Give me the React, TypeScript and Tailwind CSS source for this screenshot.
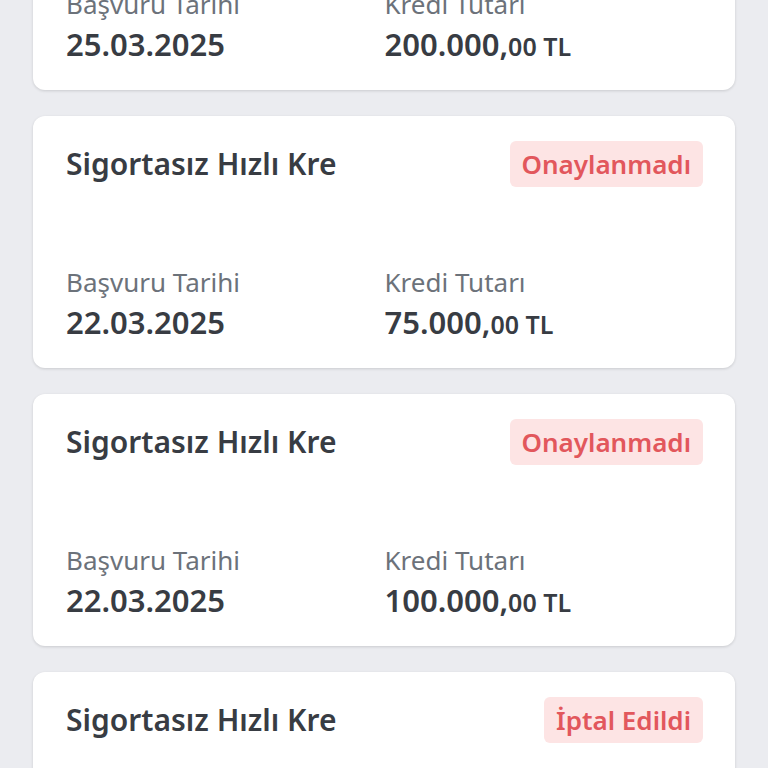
const applications = [
  { date: "25.03.2025", amount: "200.000", status: "Onaylanmadı" },
  { date: "22.03.2025", amount: "75.000", status: "Onaylanmadı" },
  { date: "22.03.2025", amount: "100.000", status: "Onaylanmadı" },
  { date: "20.03.2025", amount: "50.000", status: "İptal Edildi" },
];

function ApplicationCard({
  date,
  amount,
  status,
}: {
  date: string;
  amount: string;
  status: string;
}) {
  return (
    <div className="flex h-[252px] shrink-0 flex-col justify-between rounded-[12px] bg-white pb-[25px] pl-[33px] pr-[32px] pt-[25px] shadow-[0_1px_3px_rgba(0,0,0,0.14)]">
      <div className="flex items-center justify-between">
        <h3 className="text-[30px] font-semibold leading-[46px] text-[#383c43]">
          Sigortasız Hızlı Kre
        </h3>
        <span className="rounded-[6px] bg-[#fde4e4] px-[12px] text-[26px] font-semibold leading-[46px] text-[#e2575c]">
          {status}
        </span>
      </div>
      <div className="grid grid-cols-2">
        <div>
          <p className="text-[26px] leading-[34px] text-[#6c727a]">Başvuru Tarihi</p>
          <p className="mt-[4px] text-[31px] font-semibold leading-[38px] text-[#383c43]">
            {date}
          </p>
        </div>
        <div>
          <p className="text-[26px] leading-[34px] text-[#6c727a]">Kredi Tutarı</p>
          <p className="mt-[4px] text-[31px] font-semibold leading-[38px] text-[#383c43]">
            {amount},<span className="text-[25px]">00 TL</span>
          </p>
        </div>
      </div>
    </div>
  );
}

export default function App() {
  return (
    <div
      className="h-[768px] w-[768px] overflow-hidden bg-[#ebecf0]"
      style={{ fontFamily: '"Noto Sans", sans-serif' }}
    >
      <div className="mt-[-162px] flex flex-col gap-[26px] pl-[33px] pr-[33px]">
        {applications.map((a, i) => (
          <ApplicationCard key={i} {...a} />
        ))}
      </div>
    </div>
  );
}
